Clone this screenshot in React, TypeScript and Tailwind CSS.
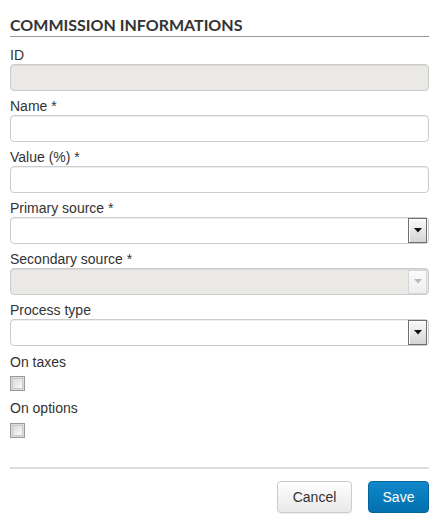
import React from "react";

const labelCls =
  "block text-[14px] leading-[18px] text-[#333333] font-['Liberation_Sans',Arial,sans-serif]";
const inputBase =
  "block w-full h-[27px] rounded-[4px] border border-[#cccccc] shadow-[inset_0_1px_1px_rgba(0,0,0,0.075)]";

function Field({ label, children }: { label: string; children: React.ReactNode }) {
  return (
    <div className="flex flex-col">
      <label className={labelCls}>{label}</label>
      {children}
    </div>
  );
}

function Select({ disabled }: { disabled?: boolean }) {
  return (
    <div
      className={
        inputBase +
        " flex items-center justify-end pr-[1px] " +
        (disabled ? "bg-[#ebe9e6]" : "bg-white")
      }
    >
      {disabled ? (
        <div className="w-[19px] h-[24px] border border-[#d6d6d6] bg-gradient-to-b from-[#fbfbfb] to-[#eeeeee] flex items-center justify-center">
          <svg width="8" height="5" viewBox="0 0 8 5">
            <path d="M0 0 L8 0 L4 4.5 Z" fill="#b9b9b9" />
          </svg>
        </div>
      ) : (
        <div className="w-[19px] h-[25px] border border-[#6f6f6f] bg-gradient-to-b from-[#fafafa] to-[#d4d4d4] shadow-[inset_1px_1px_0_#ffffff] flex items-center justify-center">
          <svg width="8" height="5" viewBox="0 0 8 5">
            <path d="M0 0 L8 0 L4 4.5 Z" fill="#111111" />
          </svg>
        </div>
      )}
    </div>
  );
}

function Checkbox() {
  return (
    <div className="w-[15px] h-[15px] border border-[#9a9a9a] p-[1px] bg-[#dcdcdc]">
      <div className="w-full h-full border border-[#c9c9c9] bg-gradient-to-br from-[#d9d9d9] to-[#fbfbfb]" />
    </div>
  );
}

export default function App() {
  return (
    <div className="bg-white w-[447px] h-[528px] pl-[10px] pr-[18px] font-['Liberation_Sans',Arial,sans-serif]">
      <div className="pt-[15px] pb-[2px] border-b border-[#9a9a9a]">
        <h2 className="text-[16px] leading-[19px] font-bold text-[#333333] font-['Lato',sans-serif]">
          COMMISSION INFORMATIONS
        </h2>
      </div>
      <div className="flex flex-col gap-[6px] mt-[9px]">
        <Field label="ID">
          <div className={inputBase + " bg-[#ebe9e6]"} />
        </Field>
        <Field label="Name *">
          <div className={inputBase + " bg-white"} />
        </Field>
        <Field label="Value (%) *">
          <div className={inputBase + " bg-white"} />
        </Field>
        <Field label="Primary source *">
          <Select />
        </Field>
        <Field label="Secondary source *">
          <Select disabled />
        </Field>
        <Field label="Process type">
          <Select />
        </Field>
      </div>
      <div className="mt-[7px] flex flex-col">
        <label className={labelCls}>On taxes</label>
        <div className="mt-[5px]">
          <Checkbox />
        </div>
        <label className={labelCls + " mt-[8px]"}>On options</label>
        <div className="mt-[6px]">
          <Checkbox />
        </div>
      </div>
      <div className="mt-[29px] border-t-2 border-[#dddddd]" />
      <div className="flex justify-end gap-[16px] mt-[12px]">
        <button className="h-[32px] w-[75px] rounded-[4px] border border-[#cccccc] bg-gradient-to-b from-[#ffffff] to-[#e8e8e8] text-[14px] text-[#333333] font-['Liberation_Sans',Arial,sans-serif] shadow-[0_1px_1px_rgba(0,0,0,0.08)]">
          Cancel
        </button>
        <button className="h-[32px] w-[61px] rounded-[4px] border border-[#04649c] bg-gradient-to-b from-[#1088c9] to-[#0370ae] text-[14px] text-white font-['Liberation_Sans',Arial,sans-serif]">
          Save
        </button>
      </div>
    </div>
  );
}
